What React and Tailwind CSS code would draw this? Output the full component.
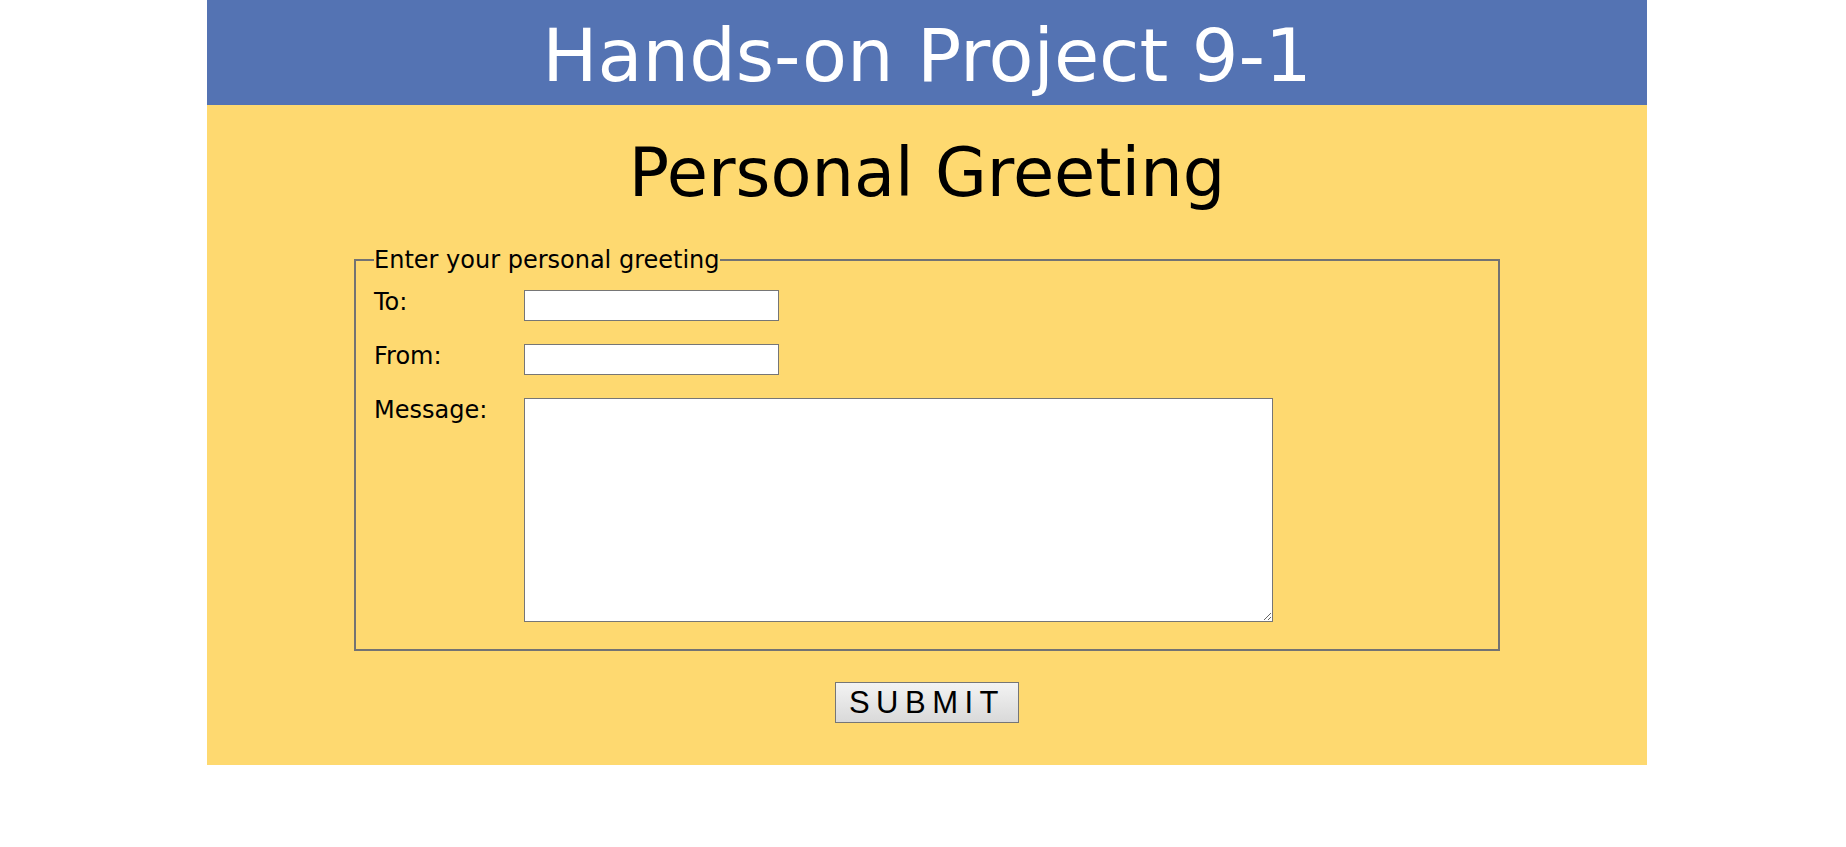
import React from "react";

function Row({ label, children }) {
  return (
    <div className="flex items-start">
      <label className="w-[150px] shrink-0 leading-[28px]">{label}</label>
      {children}
    </div>
  );
}

function App() {
  return (
    <div className="min-h-[847px] bg-white font-['DejaVu_Sans',Verdana,sans-serif] text-black">
      <div className="ml-[207px] w-[1440px]">
        <header className="h-[105px] bg-[#5473b3] pt-[19px] text-center">
          <h1 className="text-[73.5px] leading-[74px] text-white">Hands-on Project 9-1</h1>
        </header>

        <main className="bg-[#fed970] pt-[35px] pb-[42px]">
          <h2 className="text-center text-[67px] leading-[67px]">Personal Greeting</h2>

          <form className="flex flex-col items-center">
            <fieldset className="mt-[39px] self-stretch mx-[147px] border-2 border-[#737373] px-[18px] pb-[27px] text-[24px]">
              <legend className="p-0 leading-[28px]">Enter your personal greeting</legend>
              <div className="flex flex-col gap-[21px] pt-[14px]">
                <Row label="To:">
                  <input type="text" className="mt-[2px] h-[31px] w-[255px] border border-[#767676] bg-white" />
                </Row>
                <Row label="From:">
                  <input type="text" className="mt-[2px] h-[31px] w-[255px] border border-[#767676] bg-white" />
                </Row>
                <Row label="Message:">
                  <textarea className="mt-[2px] h-[224px] w-[749px] border border-[#767676] bg-white" />
                </Row>
              </div>
            </fieldset>

            <button
              type="button"
              className="mt-[31px] h-[41px] border border-[#767676] bg-gradient-to-b from-[#f3f3f3] to-[#d9d9d9] px-[13px] font-['Liberation_Sans',Arial,sans-serif] text-[31px] leading-none tracking-[6.5px]"
            >
              SUBMIT
            </button>
          </form>
        </main>
      </div>
    </div>
  );
}

export default App;
